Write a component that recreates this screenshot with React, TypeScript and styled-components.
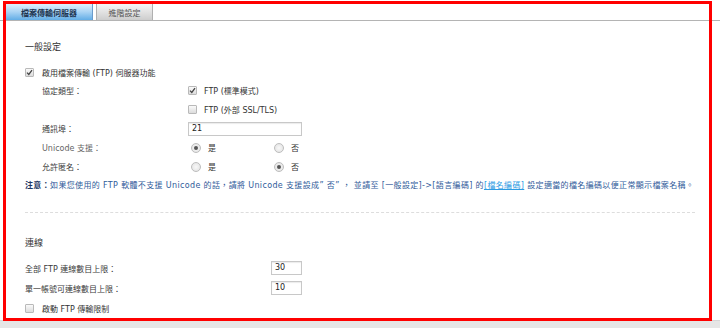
import React from 'react';
import styled, { createGlobalStyle } from 'styled-components';

const Global = createGlobalStyle`
  html, body {
    margin: 0;
    padding: 0;
    background: #ffffff;
  }
  body {
    font-family: "DejaVu Sans", "Noto Sans CJK TC", sans-serif;
    font-size: 8px;
    color: #333333;
  }
`;

const Page = styled.div`
  position: relative;
  width: 720px;
  height: 328px;
  overflow: hidden;
  display: flex;
  flex-direction: column;
`;

const TabBar = styled.div`
  display: flex;
  align-items: flex-end;
  gap: 3px;
  height: 20px;
  padding-left: 5px;
  border-bottom: 1px solid #b4b4b4;
  box-sizing: content-box;
`;

const Tab = styled.div<{ $active?: boolean }>`
  height: 17px;
  width: ${(p) => (p.$active ? '88px' : '57px')};
  box-sizing: border-box;
  display: flex;
  align-items: center;
  justify-content: center;
  font-size: 8px;
  color: ${(p) => (p.$active ? '#1d3450' : '#555555')};
  font-weight: ${(p) => (p.$active ? 'bold' : 'normal')};
  border: 1px solid ${(p) => (p.$active ? '#6a9ccc' : '#b0b0b0')};
  border-bottom: none;
  background: ${(p) =>
    p.$active
      ? 'linear-gradient(#dff0fc, #a9d3f4 50%, #62ade6)'
      : 'linear-gradient(#f6f6f6, #e2e2e2 50%, #cdcdcd)'};
`;

const Panel = styled.div`
  flex: 1;
  padding: 18px 25px 0 25px;
  display: flex;
  flex-direction: column;
`;

const Heading = styled.div<{ $top?: number }>`
  height: 16px;
  line-height: 16px;
  font-size: 9px;
  color: #333333;
  margin-top: ${(p) => p.$top ?? 0}px;
`;

const CheckRow = styled.div<{ $top?: number }>`
  display: flex;
  align-items: center;
  gap: 8px;
  height: ${(p) => (p.$top !== undefined ? 17 : 20)}px;
  margin-top: ${(p) => p.$top ?? 0}px;
`;

const FormRow = styled.div<{ $label: number; $indent?: number; $h?: number }>`
  display: grid;
  grid-template-columns: ${(p) => p.$label}px 1fr;
  align-items: center;
  height: ${(p) => p.$h ?? 19}px;
  padding-left: ${(p) => p.$indent ?? 0}px;
`;

const Label = styled.span<{ $muted?: boolean }>`
  color: ${(p) => (p.$muted ? '#666666' : '#3a3a3a')};
  white-space: nowrap;
`;

const Option = styled.label<{ $w?: number }>`
  display: inline-flex;
  align-items: center;
  gap: 7px;
  width: ${(p) => p.$w ?? 83}px;
  color: #333333;
  white-space: nowrap;
`;

const Options = styled.div<{ $pad?: number }>`
  display: flex;
  align-items: center;
  padding-left: ${(p) => p.$pad ?? 0}px;
`;

const Box = styled.span`
  width: 9px;
  height: 9px;
  box-sizing: border-box;
  border: 1px solid #b9b9b9;
  border-radius: 1px;
  background: linear-gradient(#fafafa, #dcdcdc);
  display: inline-flex;
  align-items: center;
  justify-content: center;
  flex: none;
`;

const Radio = styled.span<{ $on?: boolean }>`
  width: 10px;
  height: 10px;
  box-sizing: border-box;
  border: 1px solid #bdbdbd;
  border-radius: 50%;
  background: radial-gradient(#f8f8f8, #e0e0e0);
  display: inline-flex;
  align-items: center;
  justify-content: center;
  flex: none;
  &::after {
    content: '';
    display: ${(p) => (p.$on ? 'block' : 'none')};
    width: 4px;
    height: 4px;
    border-radius: 50%;
    background: #555555;
  }
`;

const TextInput = styled.div<{ $w: number }>`
  width: ${(p) => p.$w}px;
  height: 14px;
  box-sizing: border-box;
  border: 1px solid #c8c8c8;
  box-shadow: inset 0 1px 1px #ececec;
  padding-left: 3px;
  line-height: 12px;
  font-size: 8px;
  color: #222222;
  background: #ffffff;
`;

const Note = styled.div`
  height: 19px;
  line-height: 19px;
  color: #2f5b9a;
  white-space: nowrap;
  font-size: 8px;
  letter-spacing: 0.35px;
`;

const NoteTitle = styled.span`
  color: #1e3763;
  font-weight: bold;
`;

const NoteLink = styled.a`
  color: #2d9be3;
  text-decoration: underline;
`;

const Divider = styled.div`
  margin-top: 17px;
  border-top: 1px dashed #dddddd;
`;

const Footer = styled.div`
  height: 7px;
  background: #e6e6e6;
  border-top: 1px solid #d6d6d6;
`;

const Annotation = styled.div`
  position: absolute;
  left: 3px;
  top: 1px;
  width: 709px;
  height: 320px;
  box-sizing: border-box;
  border: 3px solid #ff0000;
  pointer-events: none;
`;

const Check = () => (
  <svg width="7" height="7" viewBox="0 0 7 7">
    <path d="M1 3.6 L2.8 5.4 L6 1.2" fill="none" stroke="#444" strokeWidth="1.3" />
  </svg>
);

const CheckBox = ({ on }: { on?: boolean }) => <Box>{on && <Check />}</Box>;

export default function App() {
  return (
    <Page>
      <Global />
      <TabBar>
        <Tab $active>檔案傳輸伺服器</Tab>
        <Tab>進階設定</Tab>
      </TabBar>
      <Panel>
        <Heading>一般設定</Heading>
        <CheckRow $top={9}>
          <CheckBox on />
          <span>啟用檔案傳輸 (FTP) 伺服器功能</span>
        </CheckRow>
        <FormRow $label={146} $indent={17}>
          <Label>協定類型：</Label>
          <Option>
            <CheckBox on />
            FTP (標準模式)
          </Option>
        </FormRow>
        <FormRow $label={146} $indent={17}>
          <Label />
          <Option>
            <CheckBox />
            FTP (外部 SSL/TLS)
          </Option>
        </FormRow>
        <FormRow $label={146} $indent={17}>
          <Label>通訊埠：</Label>
          <TextInput $w={114}>21</TextInput>
        </FormRow>
        <FormRow $label={146} $indent={17}>
          <Label $muted>Unicode 支援：</Label>
          <Options $pad={3}>
            <Option>
              <Radio $on />是
            </Option>
            <Option>
              <Radio />否
            </Option>
          </Options>
        </FormRow>
        <FormRow $label={146} $indent={17}>
          <Label>允許匿名：</Label>
          <Options $pad={3}>
            <Option>
              <Radio />是
            </Option>
            <Option>
              <Radio $on />否
            </Option>
          </Options>
        </FormRow>
        <Note>
          <NoteTitle>注意：</NoteTitle>如果您使用的 FTP 軟體不支援 Unicode 的話，請將 Unicode 支援設成” 否” ， 並請至 [一般設定]-&gt;[語言編碼] 的
          <NoteLink href="#">[檔名編碼]</NoteLink> 設定適當的檔名編碼以便正常顯示檔案名稱。
        </Note>
        <Divider />
        <Heading $top={22}>連線</Heading>
        <FormRow $label={246} $h={20} style={{ marginTop: 7 }}>
          <Label>全部 FTP 連線數目上限：</Label>
          <TextInput $w={31}>30</TextInput>
        </FormRow>
        <FormRow $label={246} $h={20}>
          <Label>單一帳號可連線數目上限：</Label>
          <TextInput $w={31}>10</TextInput>
        </FormRow>
        <CheckRow>
          <CheckBox />
          <span>啟動 FTP 傳輸限制</span>
        </CheckRow>
      </Panel>
      <Footer />
      <Annotation />
    </Page>
  );
}
